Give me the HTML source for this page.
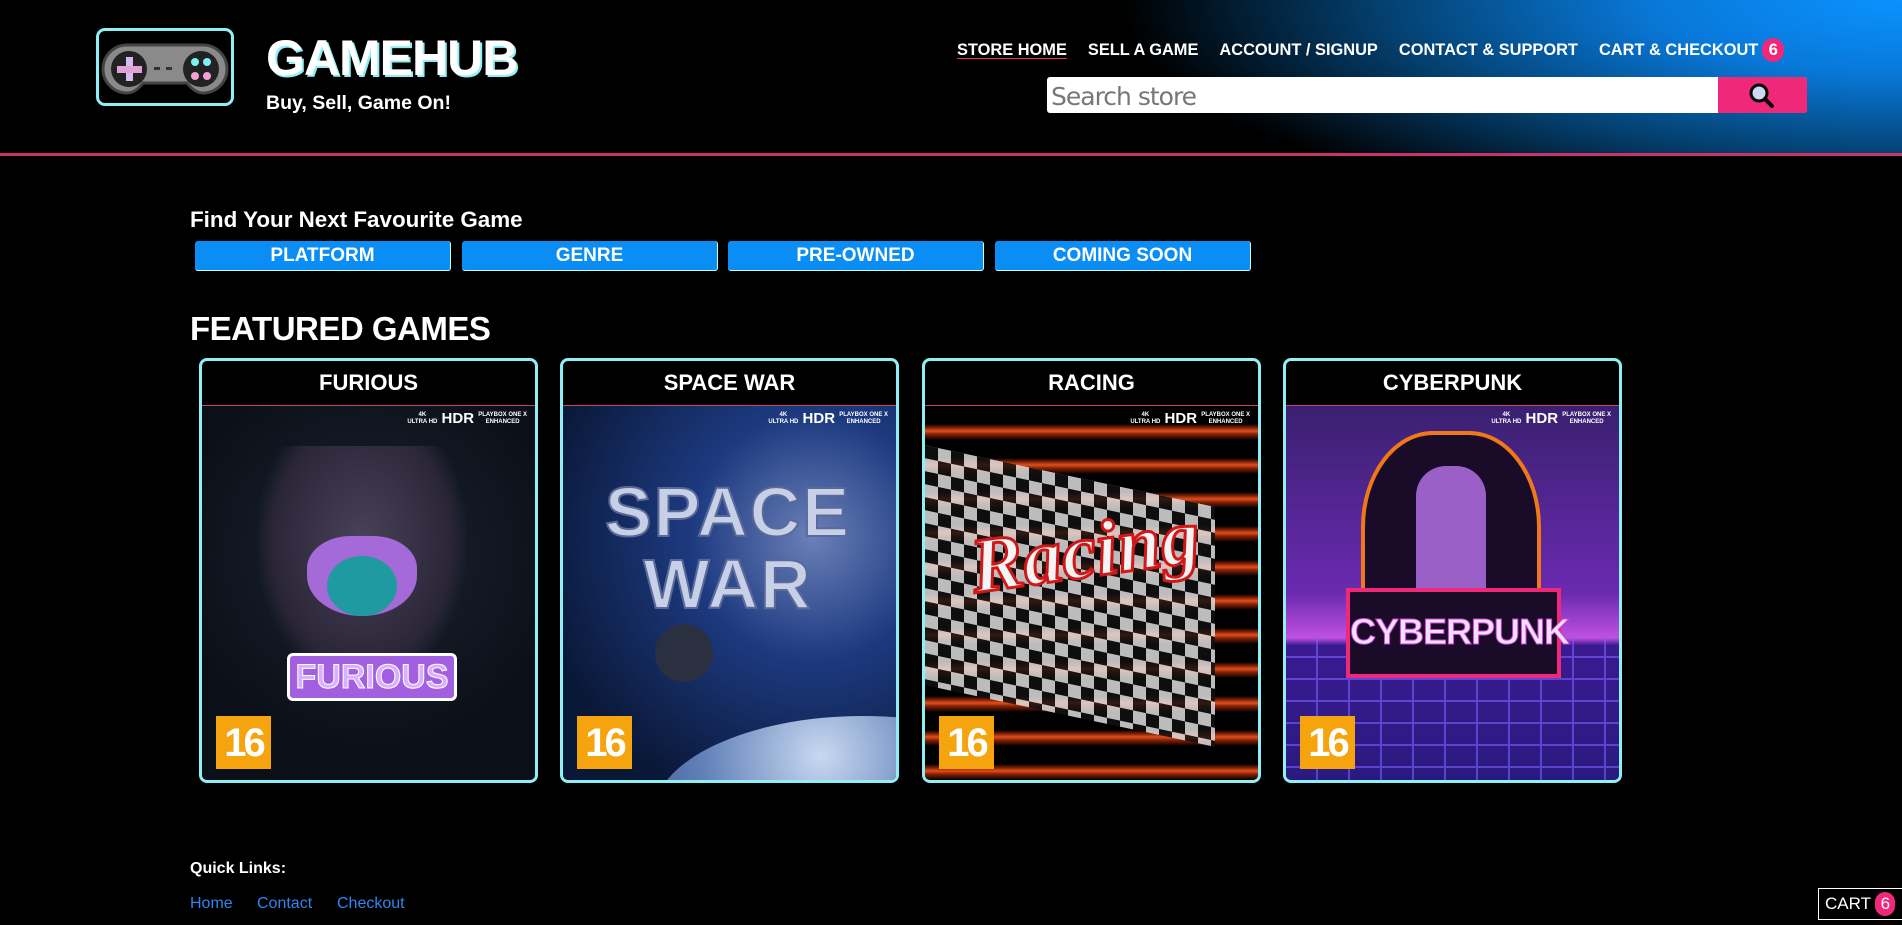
<!DOCTYPE html>
<html><head><meta charset="utf-8"><style>
*{margin:0;padding:0;box-sizing:border-box}
body{width:1902px;height:925px;background:#000;font-family:"Liberation Sans",Arial,sans-serif;color:#fff;overflow:hidden;position:relative}
header{position:absolute;left:0;top:0;width:1902px;height:156px;background:radial-gradient(ellipse 1000px 300px at 1902px 0,#0a92ff 0%,#0878d8 25%,#04406f 52%,#000 78%);border-bottom:3px solid #c8336a}
.logo{position:absolute;left:96px;top:28px;width:138px;height:78px;border:3px solid #8ef0f4;border-radius:9px}
.brand{position:absolute;left:266px;top:29px;font-size:50px;font-weight:bold;letter-spacing:-1px;text-shadow:2px 2px 0 #8ef0f4}
.tag{position:absolute;left:266px;top:92px;font-size:19.5px;font-weight:bold}
nav{position:absolute;left:957px;top:38px;font-size:16.4px;font-weight:bold;white-space:nowrap}
nav span{margin-right:21px}
nav .on{text-decoration:underline;text-decoration-color:#e8336f;text-underline-offset:3px}
.badge{display:inline-block;width:22px;height:24px;border-radius:11px;background:#f0287a;text-align:center;line-height:24px;margin-left:4px}
.search{position:absolute;left:1047px;top:77px;width:760px;height:36px;background:#fff;border-radius:3px;overflow:hidden}
.search span{position:absolute;left:4px;top:5px;font-size:25px;color:#777;font-family:"DejaVu Sans",sans-serif;letter-spacing:-1px}
.search .btn{position:absolute;right:0;top:0;width:89px;height:36px;background:#f0287a}
h2.find{position:absolute;left:190px;top:207px;font-size:22.4px;font-weight:bold}
.cats{position:absolute;top:241px;left:195px}
.cat{position:absolute;top:0;width:256px;height:30px;background:#0a8ef5;border:1px solid #cfe;border-top:none;border-left:none;border-radius:3px;text-align:center;font-weight:bold;font-size:19px;line-height:30px}
h2.feat{position:absolute;left:190px;top:310px;font-size:33px;font-weight:bold;letter-spacing:-.5px}
.card{position:absolute;top:358px;width:339px;height:425px;border:3px solid #8ef0f4;border-radius:8px;overflow:hidden;background:#000}
.card .t{height:45px;border-bottom:1px solid #d03a6c;text-align:center;font-size:22px;font-weight:bold;line-height:44px}
.card .img{position:absolute;left:0;top:45px;right:0;bottom:0;overflow:hidden}
.r16{position:absolute;left:14px;bottom:11px;width:55px;height:53px;background:#f5a40d;color:#fff;font-weight:bold;font-size:40px;text-align:center;line-height:54px;letter-spacing:-3px}
.hd{position:absolute;right:8px;top:4px;font-size:15px;font-weight:bold;white-space:nowrap}
.hd small{font-size:6px;display:inline-block;text-align:center;vertical-align:middle;line-height:7px}
.art{position:absolute;font-weight:bold;text-align:center}
footer .q{position:absolute;left:190px;top:860px;font-size:16px;font-weight:bold}
footer .l{position:absolute;top:895px;font-size:16px;color:#2f86f0}
.fc{position:absolute;left:1818px;top:888px;width:84px;height:32px;border:1px solid #fff;border-right:none;background:#000;font-size:17px;line-height:30px;padding-left:6px}
</style></head><body>
<header>
<div class="logo"><svg width="132" height="72" viewBox="0 0 132 72"><path d="M28 14 H104 A24 24 0 0 1 104 62 Q96 62 88 52 H44 Q36 62 28 62 A24 24 0 0 1 28 14Z" fill="#8a8a8a" stroke="#444" stroke-width="3"/><circle cx="30" cy="38" r="18" fill="#222"/><circle cx="102" cy="38" r="18" fill="#222"/><rect x="27" y="26" width="7" height="24" fill="#d8b8f0"/><rect x="18" y="35" width="25" height="7" fill="#e0a0d8"/><circle cx="96" cy="31" r="4" fill="#7ef0f0"/><circle cx="108" cy="31" r="4" fill="#7ef0f0"/><circle cx="96" cy="45" r="4" fill="#f5a0d8"/><circle cx="108" cy="45" r="4" fill="#f5a0d8"/><rect x="55" y="36" width="6" height="3" fill="#333"/><rect x="67" y="36" width="6" height="3" fill="#333"/></svg></div>
<div class="brand">GAMEHUB</div>
<div class="tag">Buy, Sell, Game On!</div>
<nav><span class="on">STORE HOME</span><span>SELL A GAME</span><span>ACCOUNT / SIGNUP</span><span>CONTACT &amp; SUPPORT</span><span style="margin:0">CART &amp; CHECKOUT</span><span class="badge">6</span></nav>
<div class="search"><span>Search store</span><div class="btn"><svg width="89" height="36"><circle cx="41" cy="16" r="8" fill="#cfd8f0" stroke="#000" stroke-width="3"/><line x1="47" y1="22" x2="54" y2="29" stroke="#000" stroke-width="4" stroke-linecap="round"/></svg></div></div>
</header>
<h2 class="find">Find Your Next Favourite Game</h2>
<div class="cats"><div class="cat" style="left:0">PLATFORM</div><div class="cat" style="left:267px">GENRE</div><div class="cat" style="left:533px">PRE-OWNED</div><div class="cat" style="left:800px">COMING SOON</div></div>
<h2 class="feat">FEATURED GAMES</h2>

<div class="card" style="left:199px"><div class="t">FURIOUS</div><div class="img" style="background:radial-gradient(circle at 50% 40%,#1c2430,#0b1018 70%)">
<div style="position:absolute;left:55px;top:40px;width:210px;height:240px;background:radial-gradient(ellipse at 50% 40%,#4a4258,#2a2638 60%,transparent 72%)"></div>
<div style="position:absolute;left:105px;top:130px;width:110px;height:80px;background:#a36ad8;border-radius:40% 40% 50% 50%"></div>
<div style="position:absolute;left:125px;top:150px;width:70px;height:60px;background:#1e9aa0;border-radius:50%"></div>
<div class="art" style="left:85px;top:247px;width:170px;height:48px;background:#a260e0;border:3px solid #fff;border-radius:6px;font-size:34px;line-height:42px;color:#d9b0ff;-webkit-text-stroke:1px #fff">FURIOUS</div>
<div class="hd"><small>4K<br>ULTRA HD</small> HDR <small>PLAYBOX ONE X<br>ENHANCED</small></div><div class="r16">16</div></div></div>

<div class="card" style="left:560px"><div class="t">SPACE WAR</div><div class="img" style="background:radial-gradient(circle at 75% 35%,#6a80b8,#1d3a80 35%,#0a1838 80%)">
<div style="position:absolute;left:90px;top:310px;width:420px;height:200px;border-radius:50%;background:radial-gradient(circle at 40% 20%,#c8d8f0,#6080b8 40%,#203060)"></div>
<div style="position:absolute;left:92px;top:218px;width:58px;height:58px;border-radius:50%;background:#2a3040"></div>
<div class="art" style="left:30px;top:70px;width:270px;font-size:70px;line-height:72px;color:#c8d0e8;-webkit-text-stroke:2px #5a6a98;letter-spacing:2px">SPACE<br>WAR</div>
<div class="hd"><small>4K<br>ULTRA HD</small> HDR <small>PLAYBOX ONE X<br>ENHANCED</small></div><div class="r16">16</div></div></div>

<div class="card" style="left:922px"><div class="t">RACING</div><div class="img" style="background:repeating-linear-gradient(180deg,#000 0,#000 18px,#8a2208 22px,#e0501a 25px,#8a2208 28px,#000 34px)">
<div style="position:absolute;left:0;top:70px;width:290px;height:240px;background:repeating-conic-gradient(#ddd 0 25%,#111 0 50%) 0 0/26px 26px;transform:skewY(12deg);opacity:.85"></div>
<div class="art" style="left:15px;top:100px;width:290px;font-size:78px;font-style:italic;font-family:'Liberation Serif',serif;color:#f4f4f4;-webkit-text-stroke:3px #d01818;transform:rotate(-8deg)">Racing</div>
<div class="hd"><small>4K<br>ULTRA HD</small> HDR <small>PLAYBOX ONE X<br>ENHANCED</small></div><div class="r16">16</div></div></div>

<div class="card" style="left:1283px"><div class="t">CYBERPUNK</div><div class="img" style="background:linear-gradient(180deg,#3a2070,#6a2ab0 50%,#c050e0 62%,#3a1a90 64%,#2a1a80);">
<div style="position:absolute;left:0;top:230px;right:0;bottom:0;background:repeating-linear-gradient(90deg,transparent 0 30px,#7a60ff 30px 32px),repeating-linear-gradient(180deg,transparent 0 20px,#7a60ff 20px 22px);opacity:.6"></div>
<div style="position:absolute;left:75px;top:25px;width:180px;height:240px;background:#1a0c28;border:4px solid #f07818;border-radius:40% 40% 10% 10%"></div>
<div style="position:absolute;left:130px;top:60px;width:70px;height:200px;background:#9a60c8;border-radius:30px"></div>
<div class="art" style="left:60px;top:182px;width:215px;height:90px;background:#1a0c28;border:4px solid #f0287a;font-size:36px;line-height:80px;color:#f0e0ff;-webkit-text-stroke:1px #d040d0;letter-spacing:-1px">CYBERPUNK</div>
<div class="hd"><small>4K<br>ULTRA HD</small> HDR <small>PLAYBOX ONE X<br>ENHANCED</small></div><div class="r16">16</div></div></div>

<footer><div class="q">Quick Links:</div><div class="l" style="left:190px">Home</div><div class="l" style="left:257px">Contact</div><div class="l" style="left:337px">Checkout</div></footer>
<div class="fc">CART <span class="badge" style="width:20px;height:24px;line-height:24px;margin:0">6</span></div>
</body></html>
